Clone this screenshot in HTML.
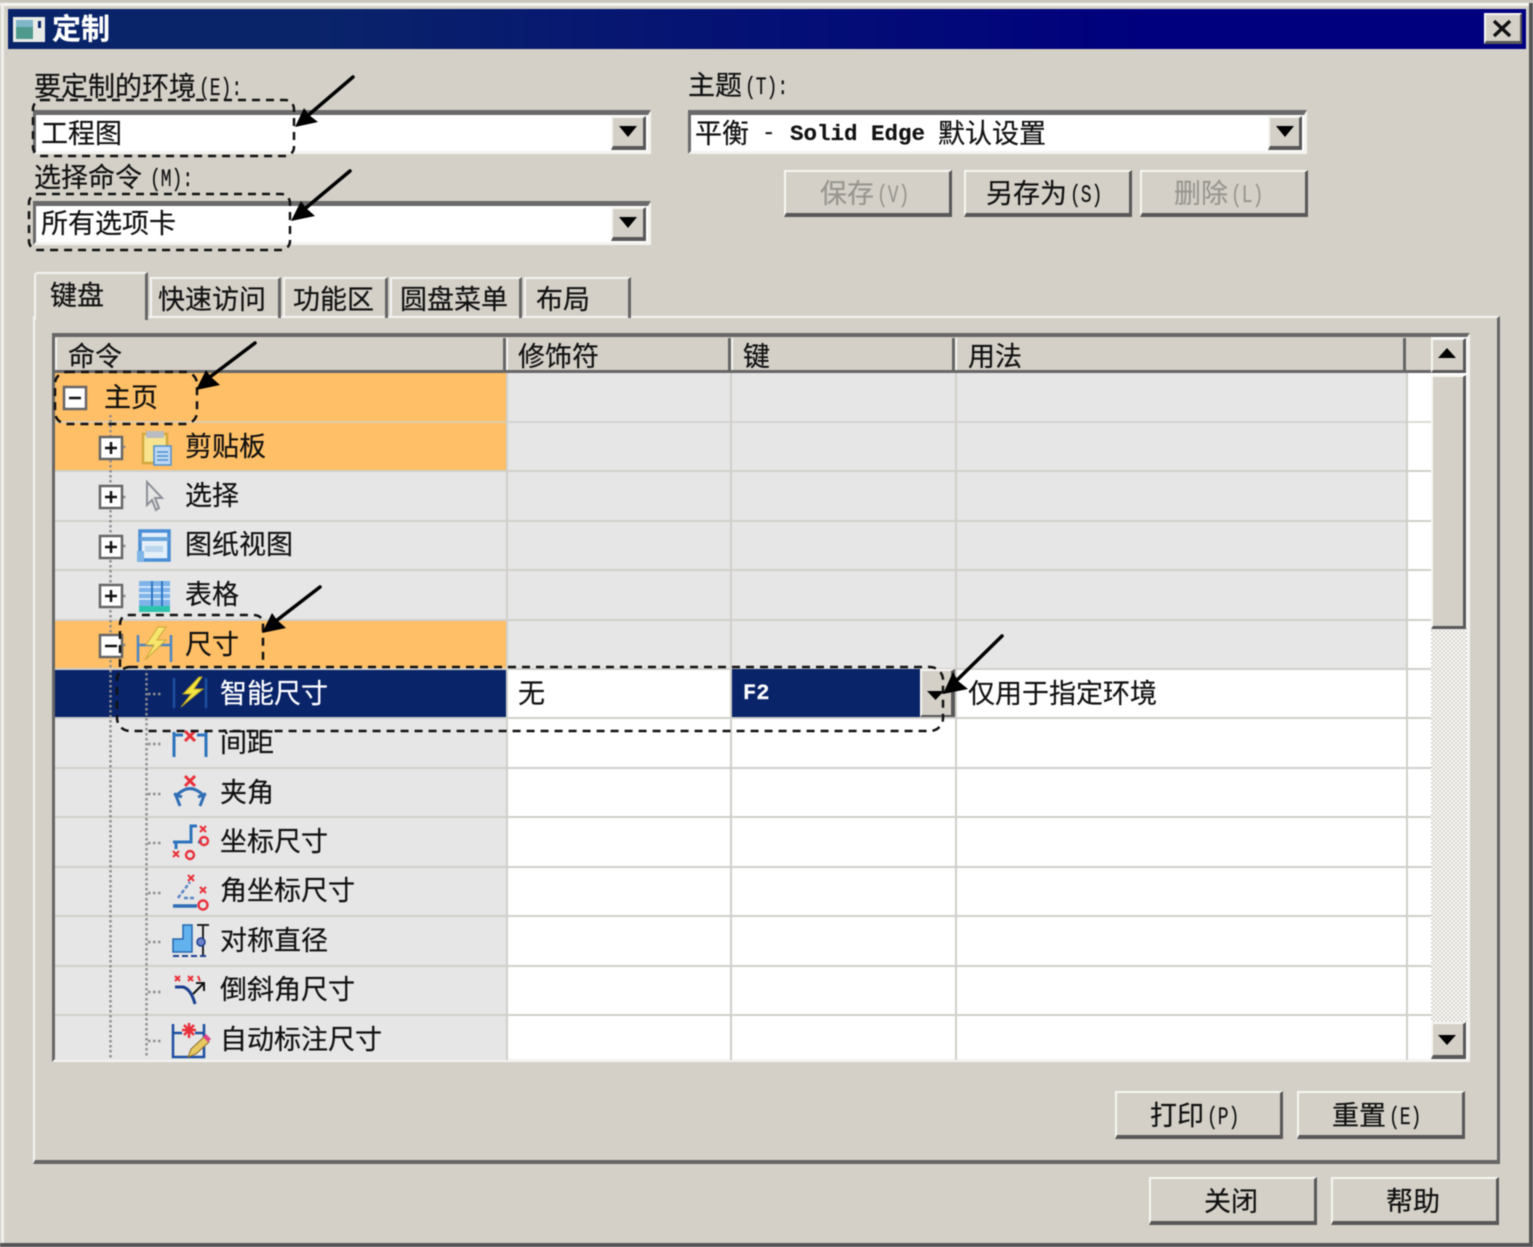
<!DOCTYPE html>
<html lang="zh"><head><meta charset="utf-8"><style>
html,body{margin:0;padding:0;background:#d4d0c8}
#r{position:relative;width:1533px;height:1247px;overflow:hidden;background:#d4d0c8;font-family:"Liberation Sans","Noto Sans CJK SC",sans-serif;font-size:27px;color:#111;filter:blur(.45px)}
#r div,#r span.t{position:absolute}
.t{white-space:nowrap;line-height:32px;letter-spacing:0;margin-top:1px;-webkit-text-stroke:.2px currentColor}
.m{font-family:"Liberation Mono",monospace;font-size:25px;display:inline-block;transform:scaleX(.72);transform-origin:0 50%;margin-left:3px;line-height:26px;position:relative;top:-1px}
.g{color:#989690}
.b{box-sizing:border-box;background:#d4d0c8;border-style:solid;border-width:2px 3px 4px 2px;border-color:#f6f5f2 #585858 #585858 #f6f5f2}
.c{box-sizing:border-box;background:#fff;border-style:solid;border-width:5px 3px 3px 3px;border-color:#6a6a6a #f4f3f0 #f4f3f0 #6a6a6a;height:44px}
.l{background:#d0cfca}
</style></head><body><div id="r">

<!-- window frame -->
<div style="left:0;top:0;width:1533px;height:2px;background:#c8c4bc"></div>
<div style="left:0;top:3px;width:1533px;height:3px;background:#f4f3ef"></div>
<div style="left:1px;top:3px;width:3px;height:1240px;background:#f0efeb"></div>
<div style="left:1529px;top:3px;width:4px;height:1244px;background:#555"></div>
<div style="left:0;top:1243px;width:1533px;height:4px;background:#555"></div>

<!-- title bar -->
<div style="left:8px;top:9px;width:1518px;height:40px;background:linear-gradient(90deg,#0a246a,#0a246a 20%,#00007e 75%,#000080)"></div>
<span class="t" style="left:52px;top:13px;color:#fff;font-weight:700;font-size:29px">定制</span>
<div class="b" style="left:1484px;top:13px;width:38px;height:31px;border-width:2px 2px 3px 2px"></div>

<!-- labels -->
<span class="t" style="left:34px;top:70px">要定制的环境<span class="m">(E):</span></span>
<span class="t" style="left:34px;top:161px">选择命令<span class="m" style="margin-left:8px">(M):</span></span>
<span class="t" style="left:688px;top:69px">主题<span class="m">(T):</span></span>

<!-- combos -->
<div class="c" style="left:33px;top:110px;width:618px"></div>
<div class="b" style="left:611px;top:116px;width:35px;height:34px"></div>
<span class="t" style="left:41px;top:117px">工程图</span>
<div class="c" style="left:33px;top:201px;width:618px"></div>
<div class="b" style="left:611px;top:207px;width:35px;height:34px"></div>
<span class="t" style="left:41px;top:207px">所有选项卡</span>
<div class="c" style="left:688px;top:110px;width:619px"></div>
<div class="b" style="left:1268px;top:116px;width:34px;height:34px"></div>
<span class="t" style="left:695px;top:117px">平衡</span>
<span class="t" style="left:762px;top:116px;font-family:'Liberation Mono',monospace;font-size:22.5px">-</span>
<span class="t" style="left:790px;top:117px;font-family:'Liberation Mono',monospace;font-size:22.5px;font-weight:700">Solid Edge</span>
<span class="t" style="left:938px;top:117px">默认设置</span>

<!-- action buttons -->
<div class="b" style="left:784px;top:170px;width:168px;height:47px"></div>
<span class="t g" style="left:820px;top:177px">保存<span class="m">(V)</span></span>
<div class="b" style="left:964px;top:170px;width:168px;height:47px"></div>
<span class="t" style="left:986px;top:177px">另存为<span class="m">(S)</span></span>
<div class="b" style="left:1140px;top:170px;width:168px;height:47px"></div>
<span class="t g" style="left:1174px;top:177px">删除<span class="m">(L)</span></span>

<!-- tab panel -->
<div style="box-sizing:border-box;left:33px;top:316px;width:1467px;height:848px;border-style:solid;border-width:2px 3px 4px 2px;border-color:#f4f3f0 #666 #666 #f4f3f0"></div>
<!-- tabs -->
<div style="box-sizing:border-box;left:34px;top:272px;width:114px;height:48px;background:#d4d0c8;border-style:solid;border-width:2px 3px 0 2px;border-color:#f4f3f0 #666;border-left-color:#f4f3f0;border-radius:4px 0 0 0"></div>
<div style="box-sizing:border-box;left:150px;top:277px;width:131px;height:41px;border-style:solid;border-width:2px 3px 0 2px;border-color:#f4f3f0 #666 #000 #f4f3f0"></div>
<div style="box-sizing:border-box;left:283px;top:277px;width:105px;height:41px;border-style:solid;border-width:2px 3px 0 2px;border-color:#f4f3f0 #666 #000 #f4f3f0"></div>
<div style="box-sizing:border-box;left:390px;top:277px;width:132px;height:41px;border-style:solid;border-width:2px 3px 0 2px;border-color:#f4f3f0 #666 #000 #f4f3f0"></div>
<div style="box-sizing:border-box;left:524px;top:277px;width:107px;height:41px;border-style:solid;border-width:2px 3px 0 2px;border-color:#f4f3f0 #666 #000 #f4f3f0"></div>
<span class="t" style="left:50px;top:279px">键盘</span>
<span class="t" style="left:158px;top:283px">快速访问</span>
<span class="t" style="left:293px;top:283px">功能区</span>
<span class="t" style="left:400px;top:283px">圆盘菜单</span>
<span class="t" style="left:536px;top:283px">布局</span>

<!-- table frame -->
<div style="box-sizing:border-box;left:52px;top:333px;width:1418px;height:729px;background:#fff;border-style:solid;border-width:4px 3px 3px 3px;border-color:#666 #f4f3f0 #f4f3f0 #666"></div>
<!-- header -->
<div style="left:55px;top:337px;width:1376px;height:33px;background:#d4d0c8"></div>
<div style="left:55px;top:370px;width:1376px;height:3px;background:#666"></div>
<div style="left:503px;top:338px;width:3px;height:33px;background:#666"></div>
<div style="left:728px;top:338px;width:3px;height:33px;background:#666"></div>
<div style="left:952px;top:338px;width:3px;height:33px;background:#666"></div>
<div style="left:1403px;top:338px;width:3px;height:33px;background:#666"></div>
<div style="left:506px;top:338px;width:2px;height:32px;background:#f4f3f0"></div>
<div style="left:731px;top:338px;width:2px;height:32px;background:#f4f3f0"></div>
<div style="left:955px;top:338px;width:2px;height:32px;background:#f4f3f0"></div>
<div style="left:55px;top:338px;width:2px;height:32px;background:#f4f3f0"></div>
<span class="t" style="left:68px;top:340px">命令</span>
<span class="t" style="left:518px;top:340px">修饰符</span>
<span class="t" style="left:743px;top:340px">键</span>
<span class="t" style="left:968px;top:340px">用法</span>

<!-- table body backgrounds -->
<div style="left:55px;top:373px;width:451px;height:687px;background:#e6e6e6"></div>
<div style="left:507px;top:373px;width:900px;height:295px;background:#e6e6e6"></div>
<div style="left:55px;top:373px;width:451px;height:97px;background:#ffbf66"></div>
<div style="left:55px;top:620px;width:451px;height:48px;background:#ffbf66"></div>
<div style="left:55px;top:669px;width:451px;height:48px;background:#0a246a"></div>
<div class="l" style="left:55px;top:421px;width:1376px;height:2px;opacity:.75"></div>
<div class="l" style="left:55px;top:470px;width:1376px;height:2px"></div>
<div class="l" style="left:55px;top:520px;width:1376px;height:2px"></div>
<div class="l" style="left:55px;top:569px;width:1376px;height:2px"></div>
<div class="l" style="left:55px;top:619px;width:1376px;height:2px"></div>
<div class="l" style="left:55px;top:668px;width:1376px;height:2px"></div>
<div class="l" style="left:55px;top:717px;width:1376px;height:2px"></div>
<div class="l" style="left:55px;top:767px;width:1376px;height:2px"></div>
<div class="l" style="left:55px;top:816px;width:1376px;height:2px"></div>
<div class="l" style="left:55px;top:866px;width:1376px;height:2px"></div>
<div class="l" style="left:55px;top:915px;width:1376px;height:2px"></div>
<div class="l" style="left:55px;top:965px;width:1376px;height:2px"></div>
<div class="l" style="left:55px;top:1014px;width:1376px;height:2px"></div>
<div class="l" style="left:506px;top:373px;width:2px;height:687px"></div>
<div class="l" style="left:730px;top:373px;width:2px;height:687px"></div>
<div class="l" style="left:955px;top:373px;width:2px;height:687px"></div>
<div class="l" style="left:1406px;top:373px;width:2px;height:687px"></div>
<!-- selected row cells -->
<div style="left:732px;top:669px;width:188px;height:48px;background:#0a246a"></div>
<div class="b" style="left:920px;top:669px;width:35px;height:48px;border-width:2px 4px 2px 2px"></div>
<span class="t" style="left:518px;top:677px">无</span>
<span class="t" style="left:743px;top:677px;color:#fff;font-family:'Liberation Mono',monospace;font-size:22px;font-weight:700">F2</span>
<span class="t" style="left:968px;top:677px">仅用于指定环境</span>

<!-- scrollbar -->
<div style="left:1431px;top:628px;width:36px;height:394px;background:repeating-conic-gradient(#d4d0c8 0 25%,#fff 0 50%) 0 0/4px 4px"></div>
<div class="b" style="left:1431px;top:338px;width:35px;height:35px;border-width:2px 3px 3px 2px"></div>
<div class="b" style="left:1431px;top:375px;width:35px;height:254px;border-width:2px 3px 3px 2px"></div>
<div class="b" style="left:1431px;top:1022px;width:35px;height:37px;border-width:2px 3px 4px 2px"></div>

<!-- tree text -->
<span class="t" style="left:104px;top:381px">主页</span>
<span class="t" style="left:185px;top:430px">剪贴板</span>
<span class="t" style="left:185px;top:479px">选择</span>
<span class="t" style="left:185px;top:528px">图纸视图</span>
<span class="t" style="left:185px;top:578px">表格</span>
<span class="t" style="left:185px;top:628px">尺寸</span>
<span class="t" style="left:220px;top:677px;color:#fff">智能尺寸</span>
<span class="t" style="left:220px;top:726px">间距</span>
<span class="t" style="left:220px;top:776px">夹角</span>
<span class="t" style="left:220px;top:825px">坐标尺寸</span>
<span class="t" style="left:220px;top:874px">角坐标尺寸</span>
<span class="t" style="left:220px;top:924px">对称直径</span>
<span class="t" style="left:220px;top:973px">倒斜角尺寸</span>
<span class="t" style="left:220px;top:1023px">自动标注尺寸</span>

<!-- bottom buttons -->
<div class="b" style="left:1115px;top:1091px;width:168px;height:48px"></div>
<span class="t" style="left:1150px;top:1099px">打印<span class="m">(P)</span></span>
<div class="b" style="left:1297px;top:1091px;width:168px;height:48px"></div>
<span class="t" style="left:1332px;top:1099px">重置<span class="m">(E)</span></span>
<div class="b" style="left:1149px;top:1177px;width:168px;height:48px"></div>
<span class="t" style="left:1204px;top:1185px">关闭</span>
<div class="b" style="left:1331px;top:1177px;width:168px;height:48px"></div>
<span class="t" style="left:1386px;top:1185px">帮助</span>

<!-- icon + annotation overlay -->
<svg width="1533" height="1247" viewBox="0 0 1533 1247" style="position:absolute;left:0;top:0">
<!-- title icon -->
<rect x="13" y="17" width="32" height="25" fill="#e8ebe6"/>
<rect x="16" y="20" width="17" height="19" fill="#4f9a8c"/>
<rect x="16" y="20" width="17" height="7" fill="#7fb6c8"/>
<rect x="38" y="21" width="3" height="7" fill="#0a246a"/>
<!-- close X -->
<path d="M1494 21L1510 36M1510 21L1494 36" stroke="#111" stroke-width="3.4"/>
<!-- arrows for combos, scroll -->
<path d="M619 126h18l-9 11zM619 217h18l-9 11zM1276 126h18l-9 11zM1438 358h18l-9-10zM1438 1035h18l-9 10zM927 691h17l-8.500 9z" fill="#000"/>

<!-- tree dotted lines -->
<g stroke="#8e8e8e" stroke-width="2.400" stroke-dasharray="2.500 2.500" fill="none">
<path d="M110.500 415V1058M146.500 668V1058"/>
<path d="M148 694h14M148 744h14M148 794h14M148 843h14M148 893h14M148 942h14M148 992h14M148 1041h14"/>
<path d="M123 447h4M123 497h4M123 546h4M123 596h4M123 645h4"/>
</g>
<!-- expand boxes -->
<g fill="#fff" stroke="#666" stroke-width="2.500">
<rect x="64" y="387" width="22" height="22"/>
<rect x="100" y="437" width="22" height="22"/>
<rect x="100" y="486" width="22" height="22"/>
<rect x="100" y="536" width="22" height="22"/>
<rect x="100" y="585" width="22" height="22"/>
<rect x="100" y="635" width="22" height="22"/>
</g>
<path d="M69 398h12M105 448h12M111 442v12M105 497h12M111 491v12M105 547h12M111 541v12M105 596h12M111 590v12M105 646h12" stroke="#111" stroke-width="2.500"/>

<!-- clipboard -->
<rect x="143" y="434" width="24" height="29" fill="#f8e48e" stroke="#d2a83e" stroke-width="2.500"/>
<rect x="146" y="431" width="18" height="7" fill="#b9bcc0"/>
<rect x="154" y="446" width="17" height="19" fill="#bcd8f2" stroke="#4f8fcf" stroke-width="1.500"/>
<path d="M157 452h11M157 456h11M157 460h11" stroke="#4f8fcf" stroke-width="1.500"/>
<!-- cursor -->
<path d="M147 482L147 505L152 500L156 510L159 508L155 498L162 498Z" fill="#e6e6e6" stroke="#8b8f96" stroke-width="2"/>
<!-- drawing view -->
<rect x="140" y="531" width="29" height="29" fill="#e4eff9" stroke="#4a8ed6" stroke-width="3.500"/>
<path d="M140 539h29" stroke="#6aa5dc" stroke-width="4"/>
<path d="M145 549h18" stroke="#bcd6ee" stroke-width="6"/>
<rect x="137" y="551" width="7" height="11" fill="#7fb4e6"/>
<!-- table -->
<rect x="139" y="581" width="31" height="31" fill="#7eb4ea"/>
<path d="M139 587h31M139 593h31M139 599h31" stroke="#e4f0fb" stroke-width="1.600"/>
<path d="M152 581v31M162 581v31" stroke="#2f78c6" stroke-width="2"/>
<rect x="139" y="606" width="31" height="6" fill="#2cc4ac"/>
<!-- dimension icon -->
<path d="M138 635v27M171 635v27M139 645h31" stroke="#4b86c6" stroke-width="2.500" fill="none"/>
<path d="M158 627L146 645L154 645L145 660L166 640L157 640L166 627Z" fill="#f7e46a" stroke="#c9a93c"/>
<!-- smart dim -->
<path d="M174 678v30M206 678v30" stroke="#1c4fa0" stroke-width="2.500"/>
<path d="M199 677L183 694L191 694L181 707L203 689L194 689L202 677Z" fill="#f4e542" stroke="#b09a20"/>
<!-- spacing -->
<path d="M174 732v25M206 732v25M174 735h9M197 735h9" stroke="#2f74bf" stroke-width="3" fill="none"/>
<path d="M185 731l10 10M195 731l-10 10" stroke="#e8303a" stroke-width="3"/>
<!-- angle -->
<path d="M185 776l10 10M195 776l-10 10" stroke="#e8303a" stroke-width="3"/>
<path d="M180 806l-5-13M200 806l5-13M177 795q13-13 26 0" stroke="#2f6eb5" stroke-width="3" fill="none"/>
<path d="M174 794l8 3M206 794l-8 3" stroke="#2f6eb5" stroke-width="3"/>
<!-- coordinate -->
<path d="M173 842h18v-16h6M198 842h4M176 843v6" stroke="#2f74bf" stroke-width="3" fill="none"/>
<path d="M200 826l6 6M206 826l-6 6M173 851l6 6M179 851l-6 6" stroke="#e8303a" stroke-width="2"/>
<circle cx="204" cy="841" r="4" fill="none" stroke="#e8303a" stroke-width="2.400"/>
<circle cx="190" cy="855" r="4" fill="none" stroke="#e8303a" stroke-width="2.400"/>
<!-- angular coordinate -->
<path d="M173 906h24" stroke="#2f6eb5" stroke-width="3.500"/>
<path d="M178 898l12-16M184 898h12" stroke="#5b86c4" stroke-width="2.500" stroke-dasharray="4 2"/>
<path d="M188 875l6 6M194 875l-6 6M200 887l6 6M206 887l-6 6" stroke="#e8303a" stroke-width="2"/>
<circle cx="203" cy="905" r="4.500" fill="none" stroke="#e8303a" stroke-width="2.400"/>
<!-- symmetric -->
<path d="M173 952V939H183V925H192V952Z" fill="#62b2ee" stroke="#2666b0" stroke-width="1.500"/>
<path d="M173 956h36" stroke="#1c3f90" stroke-width="2" stroke-dasharray="6 3"/>
<path d="M197 925h12M203 925v30" stroke="#222" stroke-width="2"/>
<circle cx="201" cy="942" r="4" fill="#6d82c8" stroke="#1c3f90" stroke-width="1.500"/>
<!-- chamfer -->
<path d="M175 976l5 5M180 976l-5 5M188 976l5 5M193 976l-5 5M198 976l2 5" stroke="#e8303a" stroke-width="2"/>
<path d="M175 987h8q8 2 12 17" stroke="#1c3f90" stroke-width="3" fill="none"/>
<path d="M193 994L203 984M196 983h8v8" stroke="#111" stroke-width="2" fill="none"/>
<!-- auto -->
<path d="M173 1024v33h31v-33M173 1033h9M195 1033h9" stroke="#1c4fa0" stroke-width="2.500" fill="none"/>
<path d="M189 1023v15M182 1030h14M184 1025l10 10M194 1025l-10 10" stroke="#e8303a" stroke-width="2.500"/>
<path d="M188 1057l3-8 13-12 5 5-13 12z" fill="#e8c860" stroke="#8a6a2a"/>
<path d="M203 1037l3-3 5 5-3 3z" fill="#e0408a"/>

<!-- dashed annotation boxes -->
<g fill="none" stroke="#111" stroke-width="2.500" stroke-dasharray="8 6">
<rect x="33" y="100" width="261" height="56" rx="9"/>
<rect x="29" y="194" width="261" height="56" rx="9"/>
<rect x="55" y="372" width="142" height="52" rx="12"/>
<path d="M120 667V625q0-10 10-10H253q10 0 10 10V667"/>
<rect x="117" y="667" width="826" height="64" rx="13"/>
</g>
<!-- arrows -->
<g stroke="#000" stroke-width="3.500" stroke-linecap="round">
<path d="M353 77L305 118"/><path d="M350 171L301 212"/><path d="M255 343L206 380"/><path d="M320 587L272 624"/><path d="M1002 636L953 684"/>
</g>
<g fill="#000">
<path d="M295 127L318 122L309 115L304 108Z"/>
<path d="M291 221L315 216L306 208L301 201Z"/>
<path d="M196 390L220 385L211 377L206 370Z"/>
<path d="M262 633L286 628L277 620L272 613Z"/>
<path d="M943 694L968 689L958 681L953 672Z"/>
</g>
</svg>
</div></body></html>
